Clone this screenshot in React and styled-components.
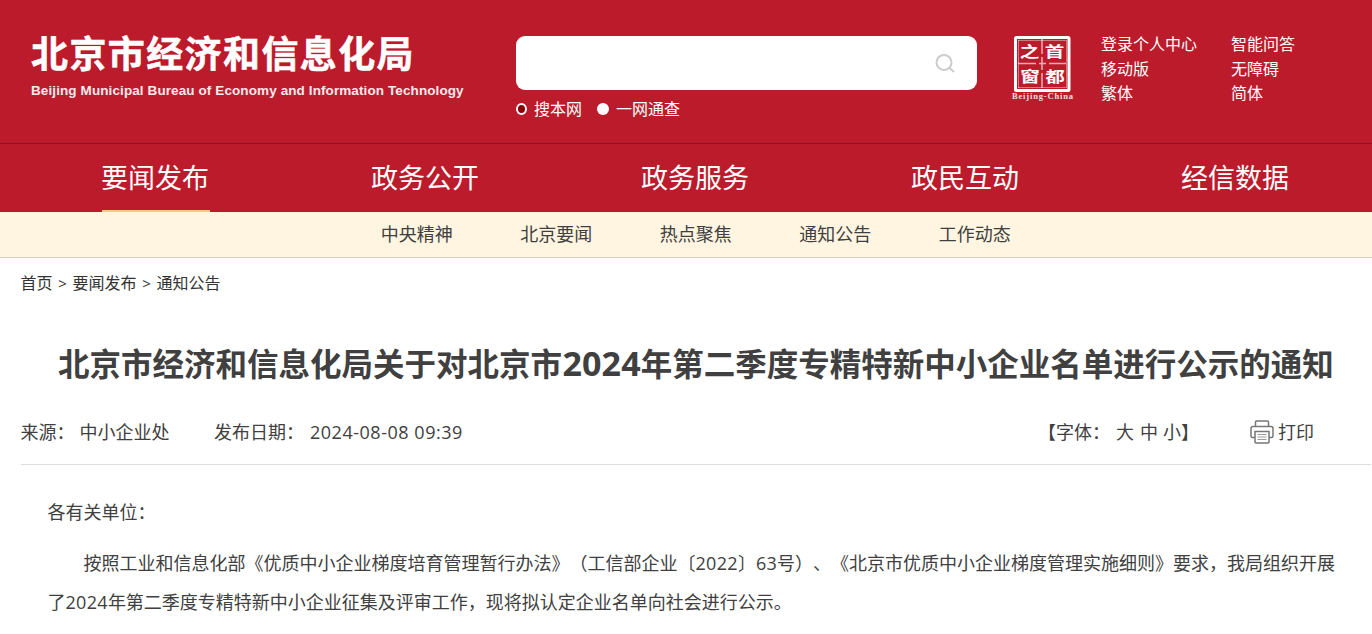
import React from "react";
import styled, { createGlobalStyle, css } from "styled-components";

const colors = {
  red: "#bc1b2c",
  redDark: "#8f1220",
  cream: "#fff5e1",
  gold: "#f8cb81",
  text: "#404040",
  white: "#fff",
};

const GlobalStyle = createGlobalStyle`
  * {
    box-sizing: border-box;
  }
  body {
    margin: 0;
    overflow: hidden;
    background: #fff;
    color: ${colors.text};
    font-family: "Open Sans", "Noto Sans CJK SC", sans-serif;
    font-weight: 400;
    text-spacing-trim: space-all;
  }
`;

const Wrap = styled.div`
  width: 1372px;
  height: 634px;
  overflow: hidden;
`;

const Header = styled.header`
  display: flex;
  height: 144px;
  padding: 0 0 0 31px;
  background: ${colors.red};
  border-bottom: 1px solid ${colors.redDark};
  color: ${colors.white};
`;

const Logo = styled.div`
  width: 485px;
  padding-top: 29px;
  white-space: nowrap;
`;

const LogoName = styled.div`
  height: 46px;
  font-family: "Noto Sans CJK SC", sans-serif;
  font-weight: 700;
  font-size: 37px;
  line-height: 46px;
  letter-spacing: 1.4px;
  -webkit-text-stroke: 0.5px ${colors.white};
`;

const LogoEnglish = styled.div`
  margin-top: 8px;
  font-family: "Liberation Sans", sans-serif;
  font-weight: 700;
  font-size: 13.5px;
  line-height: 16px;
  letter-spacing: 0.1px;
  color: #fbe9eb;
`;

const Search = styled.div`
  width: 461px;
  padding-top: 36px;
`;

const SearchBox = styled.div`
  display: flex;
  align-items: center;
  justify-content: flex-end;
  height: 54px;
  padding-right: 21px;
  background: ${colors.white};
  border-radius: 9px;
`;

const SearchOptions = styled.div`
  display: flex;
  align-items: center;
  height: 22px;
  margin-top: 8px;
  font-size: 16px;
  line-height: 22px;
`;

const Radio = styled.span`
  width: 12px;
  height: 12px;
  margin-right: 7px;
  border-radius: 50%;
  background: ${colors.white};
  ${({ $checked }) =>
    $checked &&
    css`
      width: 11px;
      border: 2px solid ${colors.white};
      background: #8b0000;
    `}
`;

const OptionLabel = styled.span`
  margin-right: 15px;
`;

const Seal = styled.svg`
  width: 64px;
  height: 68px;
  margin: 35px 0 0 34px;
  flex: none;
`;

const Links = styled.div`
  display: grid;
  grid-template-columns: 130px 100px;
  grid-auto-rows: 24.5px;
  height: 74px;
  margin: 32px 0 0 26px;
  font-size: 16px;
  line-height: 24px;
  white-space: nowrap;
`;

const Nav = styled.nav`
  display: flex;
  height: 68px;
  padding-left: 21px;
  background: ${colors.red};
  color: ${colors.white};
`;

const NavItem = styled.div`
  display: flex;
  justify-content: center;
  flex: 0 0 270px;
`;

const NavLabel = styled.span`
  width: 108px;
  height: 68px;
  font-size: 27px;
  line-height: 68px;
  text-indent: -1px;
  white-space: nowrap;
  border-bottom: 2px solid ${({ $active }) => ($active ? colors.gold : "transparent")};
`;

const SubNav = styled.nav`
  display: flex;
  height: 46px;
  padding-left: 347px;
  background: ${colors.cream};
  border-bottom: 1px solid ${colors.gold};
`;

const SubNavItem = styled.div`
  flex: 0 0 139.5px;
  font-size: 18px;
  line-height: 45px;
  text-align: center;
`;

const Breadcrumb = styled.div`
  display: flex;
  height: 24px;
  margin: 13px 0 0 20.5px;
  font-size: 16px;
  line-height: 24px;
  color: #333;
`;

const Separator = styled.span`
  width: 20px;
  font-size: 15px;
  line-height: 25px;
  text-align: center;
`;

const Title = styled.h1`
  height: 46px;
  margin: 46px 0 0 58px;
  font-size: 31.5px;
  font-weight: 700;
  line-height: 46px;
  white-space: nowrap;
`;

const Year = styled.span`
  margin-left: 0.5px;
  font-size: 34px;
  line-height: 1;
  letter-spacing: 0.1px;
`;

const Meta = styled.div`
  display: flex;
  align-items: center;
  height: 64px;
  margin: 14px 1px 0 20.5px;
  padding-bottom: 1px;
  border-bottom: 1px solid #ddd;
  font-size: 18px;
  line-height: 24px;
  white-space: nowrap;
`;

const Source = styled.span`
  width: 193.5px;
`;

const PublishDate = styled.span`
  width: 824px;
`;

const DateValue = styled.span`
  letter-spacing: 0.52px;
`;

const FontSize = styled.span`
  width: 212px;
`;

const Gap = styled.span`
  display: inline-block;
  width: ${({ $width }) => $width}px;
`;

const PrintIcon = styled.svg`
  width: 24px;
  height: 24px;
  margin-right: 4px;
`;

const Article = styled.article`
  padding: 28px 0 0 47.5px;
  font-size: 18px;
  line-height: 39px;
  white-space: nowrap;
`;

const Paragraph = styled.p`
  margin: 0 0 12px;
  text-indent: ${({ $indent }) => ($indent ? "2em" : 0)};
`;

const Digits = styled.span`
  letter-spacing: 0.3px;
`;

const links = ["登录个人中心", "智能问答", "移动版", "无障碍", "繁体", "简体"];
const navItems = ["要闻发布", "政务公开", "政务服务", "政民互动", "经信数据"];
const subNavItems = ["中央精神", "北京要闻", "热点聚焦", "通知公告", "工作动态"];
const sealChars = [
  { char: "之", x: 18.5, y: 21.5 },
  { char: "首", x: 43.5, y: 21.5 },
  { char: "窗", x: 19, y: 46.5 },
  { char: "都", x: 44, y: 46.5 },
];

const CapitalSeal = () => (
  <Seal viewBox="0 0 64 68" fill="none">
    <rect x="4.5" y="2.5" width="53.5" height="53" rx="1" stroke="#fff" strokeWidth="3" />
    <path
      d="M7 28.5h18M28 28.5h7M38 28.5h17M31 4v15M31 22v13M31 38v15"
      stroke="#fff"
      strokeWidth="1.5"
      opacity="0.65"
    />
    <path d="M7.5 5v48M55.5 5v48M7 5.5h48M7 52.5h48" stroke="#fff" opacity="0.4" />
    {sealChars.map(({ char, x, y }) => (
      <text
        key={char}
        transform={`translate(${x} ${y}) scale(1.35 1)`}
        fill="#fff"
        fontFamily="Noto Sans CJK SC"
        fontWeight="700"
        fontSize="14.5"
        textAnchor="middle"
      >
        {char}
      </text>
    ))}
    <text
      x="1"
      y="64"
      fill="#fff"
      fontFamily="Liberation Serif"
      fontWeight="700"
      fontSize="8.5"
      textLength="61"
      opacity="0.85"
    >
      Beijing-China
    </text>
  </Seal>
);

export default function App() {
  return (
    <Wrap>
      <GlobalStyle />
      <Header>
        <Logo>
          <LogoName>北京市经济和信息化局</LogoName>
          <LogoEnglish>
            Beijing Municipal Bureau of Economy and Information Technology
          </LogoEnglish>
        </Logo>
        <Search>
          <SearchBox>
            <svg width="21" height="21" viewBox="0 0 21 21" fill="none" stroke="#ccc" strokeWidth="2">
              <circle cx="9" cy="9.5" r="7.5" />
              <path d="M14 14.5l5 4.500" />
            </svg>
          </SearchBox>
          <SearchOptions>
            <Radio $checked />
            <OptionLabel>搜本网</OptionLabel>
            <Radio />
            <OptionLabel>一网通查</OptionLabel>
          </SearchOptions>
        </Search>
        <CapitalSeal />
        <Links>
          {links.map((link) => (
            <span key={link}>{link}</span>
          ))}
        </Links>
      </Header>
      <Nav>
        {navItems.map((item, index) => (
          <NavItem key={item}>
            <NavLabel $active={index === 0}>{item}</NavLabel>
          </NavItem>
        ))}
      </Nav>
      <SubNav>
        {subNavItems.map((item) => (
          <SubNavItem key={item}>{item}</SubNavItem>
        ))}
      </SubNav>
      <Breadcrumb>
        <span>首页</span>
        <Separator>&gt;</Separator>
        <span>要闻发布</span>
        <Separator>&gt;</Separator>
        <span>通知公告</span>
      </Breadcrumb>
      <Title>
        北京市经济和信息化局关于对北京市<Year>2024</Year>年第二季度专精特新中小企业名单进行公示的通知
      </Title>
      <Meta>
        <Source>
          来源：
          <Gap $width={5} />
          中小企业处
        </Source>
        <PublishDate>
          发布日期：
          <Gap $width={6} />
          <DateValue>2024-08-08 09:39</DateValue>
        </PublishDate>
        <FontSize>
          【字体：
          <Gap $width={6} />大<Gap $width={6} />中<Gap $width={5} />
          小】
        </FontSize>
        <PrintIcon viewBox="0 0 24 24" fill="none" stroke="#777" strokeWidth="1.5">
          <path d="M5.5 6V2q0-1 1-1h11q1 0 1 1v4" />
          <path d="M5 17.5H2.500Q1 17.500 1 16V8.500Q1 6.500 3 6.500H21Q23 6.500 23 8.500V16Q23 17.500 21.500 17.500H19" />
          <path d="M5 11.500H19V22Q19 23 18 23H6Q5 23 5 22Z" />
          <path d="M7.500 14.500h9M7.500 17h9M7.500 19.500h9" stroke="#999" strokeWidth="1" />
        </PrintIcon>
        <span>打印</span>
      </Meta>
      <Article>
        <Paragraph>各有关单位：</Paragraph>
        <Paragraph $indent>
          按照工业和信息化部《优质中小企业梯度培育管理暂行办法》（工信部企业〔<Digits>2022</Digits>〕
          <Digits>63</Digits>
          号）、《北京市优质中小企业梯度管理实施细则》要求，我局组织开展
          <br />
          了<Digits>2024</Digits>
          年第二季度专精特新中小企业征集及评审工作，现将拟认定企业名单向社会进行公示。
        </Paragraph>
      </Article>
    </Wrap>
  );
}
